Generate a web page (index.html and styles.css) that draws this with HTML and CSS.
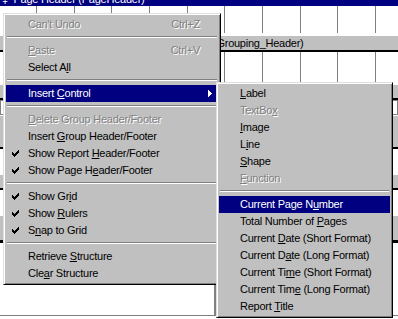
FILE: index.html
```html
<!DOCTYPE html>
<html lang="en">
<head>
  <meta charset="UTF-8" />
  <title>Report Designer</title>
  <link rel="stylesheet" href="styles.css">
</head>
<body>

  <!-- Report designer surface behind the menus -->
  <div class="designer">
    <div class="titlebar"><span class="titlebar-text">‡&nbsp;&nbsp;Page Header (PageHeader)</span></div>
    <div class="grid grid-top"></div>
    <div class="band band-group">(Grouping_Header)</div>
    <div class="grid grid-mid"></div>
    <div class="band band-thin"></div>
    <div class="field-row"></div>
    <div class="band band-tall"></div>
    <div class="grid grid-short"></div>
    <div class="band band-thin"></div>
    <div class="grid grid-short"></div>
    <div class="band band-low"></div>
    <div class="page-end"></div>
  </div>

  <!-- Context menu -->
  <div class="menu main-menu">
    <div class="item disabled"><span></span><span>Can't Undo</span><span class="key">Ctrl+Z</span></div>
    <div class="sep"></div>
    <div class="item disabled"><span></span><span><u>P</u>aste</span><span class="key">Ctrl+V</span></div>
    <div class="item"><span></span><span>Select A<u>l</u>l</span><span></span></div>
    <div class="sep"></div>
    <div class="item active"><span></span><span>Insert <u>C</u>ontrol</span>
      <svg class="arrow" width="4" height="7" viewBox="0 0 4 7"><path d="M0 0h1v7H0zM1 1h1v5H1zM2 2h1v3H2zM3 3h1v1H3z" fill="#fff"/></svg>
    </div>
    <div class="sep"></div>
    <div class="item disabled"><span></span><span><u>D</u>elete Group Header/Footer</span><span></span></div>
    <div class="item"><span></span><span>Insert <u>G</u>roup Header/Footer</span><span></span></div>
    <div class="item"><svg class="check" width="7" height="7" viewBox="0 0 7 7"><path d="M6 0h1v3H6zM5 1h1v3H5zM4 2h1v3H4zM3 3h1v3H3zM2 4h1v3H2zM1 3h1v3H1zM0 2h1v3H0z"/></svg><span>Show Report <u>H</u>eader/Footer</span><span></span></div>
    <div class="item"><svg class="check" width="7" height="7" viewBox="0 0 7 7"><path d="M6 0h1v3H6zM5 1h1v3H5zM4 2h1v3H4zM3 3h1v3H3zM2 4h1v3H2zM1 3h1v3H1zM0 2h1v3H0z"/></svg><span>Show Page H<u>e</u>ader/Footer</span><span></span></div>
    <div class="sep"></div>
    <div class="item"><svg class="check" width="7" height="7" viewBox="0 0 7 7"><path d="M6 0h1v3H6zM5 1h1v3H5zM4 2h1v3H4zM3 3h1v3H3zM2 4h1v3H2zM1 3h1v3H1zM0 2h1v3H0z"/></svg><span>Show Gr<u>i</u>d</span><span></span></div>
    <div class="item"><svg class="check" width="7" height="7" viewBox="0 0 7 7"><path d="M6 0h1v3H6zM5 1h1v3H5zM4 2h1v3H4zM3 3h1v3H3zM2 4h1v3H2zM1 3h1v3H1zM0 2h1v3H0z"/></svg><span>Show <u>R</u>ulers</span><span></span></div>
    <div class="item"><svg class="check" width="7" height="7" viewBox="0 0 7 7"><path d="M6 0h1v3H6zM5 1h1v3H5zM4 2h1v3H4zM3 3h1v3H3zM2 4h1v3H2zM1 3h1v3H1zM0 2h1v3H0z"/></svg><span>S<u>n</u>ap to Grid</span><span></span></div>
    <div class="sep"></div>
    <div class="item"><span></span><span>Retrieve <u>S</u>tructure</span><span></span></div>
    <div class="item"><span></span><span>Cle<u>a</u>r Structure</span><span></span></div>
  </div>

  <!-- Insert Control submenu -->
  <div class="menu sub-menu">
    <div class="item"><span></span><span><u>L</u>abel</span><span></span></div>
    <div class="item disabled"><span></span><span>TextBo<u>x</u></span><span></span></div>
    <div class="item"><span></span><span><u>I</u>mage</span><span></span></div>
    <div class="item"><span></span><span>L<u>i</u>ne</span><span></span></div>
    <div class="item"><span></span><span><u>S</u>hape</span><span></span></div>
    <div class="item disabled"><span></span><span><u>F</u>unction</span><span></span></div>
    <div class="sep"></div>
    <div class="item active"><span></span><span>Current Page N<u>u</u>mber</span><span></span></div>
    <div class="item"><span></span><span>Total Number of <u>P</u>ages</span><span></span></div>
    <div class="item"><span></span><span>Current <u>D</u>ate (Short Format)</span><span></span></div>
    <div class="item"><span></span><span>Current D<u>a</u>te (Long Format)</span><span></span></div>
    <div class="item"><span></span><span>Current Ti<u>m</u>e (Short Format)</span><span></span></div>
    <div class="item"><span></span><span>Current Tim<u>e</u> (Long Format)</span><span></span></div>
    <div class="item"><span></span><span>Report <u>T</u>itle</span><span></span></div>
  </div>

</body>
</html>
```

FILE: styles.css
```css
* {
  box-sizing: border-box;
  margin: 0;
  padding: 0;
}

body {
  width: 398px;
  height: 319px;
  overflow: hidden;
  position: relative;
  background: #fff;
  color: #000;
  font-family: "Liberation Sans", Arial, sans-serif;
  font-size: 11px;
  letter-spacing: -0.25px;
}

/* designer surface */
.designer {
  display: flex;
  flex-direction: column;
  height: 319px;
}

.designer > div {
  flex: none;
}

.titlebar {
  height: 6px;
  background: #000080;
  color: #fff;
  overflow: hidden;
  padding-left: 2px;
}

.titlebar-text {
  display: block;
  line-height: 12px;
  margin-top: -7px;
  white-space: nowrap;
}

.grid {
  background: repeating-linear-gradient(90deg, #fff 0 36px, #808080 36px 37px, #fff 37px 37.67px);
}

.grid-top {
  height: 29px;
  border-bottom: 2px solid #fff;
}

.grid-mid {
  height: 32px;
}

.grid-short {
  height: 25px;
}

.band {
  background: #c0c0c0;
  border-top: 1px solid #fff;
}

.band-group {
  height: 17px;
  line-height: 14px;
  padding-left: 213px;
  border-bottom: 2px solid #000;
  white-space: nowrap;
}

.band-thin {
  height: 16px;
  border-bottom: 2px solid #000;
}

.band-tall {
  height: 34px;
  border-bottom: 2px solid #000;
}

.band-low {
  height: 28px;
  border-bottom: 3px solid #000;
}

.field-row {
  height: 15px;
  background: #fff;
  border: 1px solid #808080;
}

.page-end {
  flex: 1 !important;
  background: linear-gradient(90deg, #fff 0 214px, #808080 214px 216px, #fff 216px);
  border-bottom: 1px solid #808080;
  margin-bottom: 3px;
}

/* menus */
.menu {
  position: absolute;
  background: #c0c0c0;
  border: 1px solid;
  border-color: #dfdfdf #000 #000 #dfdfdf;
  box-shadow: inset 1px 1px #fff, inset -1px -1px #808080;
  padding: 2px;
}

.main-menu {
  left: 3px;
  top: 13px;
  width: 218px;
}

.sub-menu {
  left: 216px;
  top: 82px;
  width: 177px;
}

.item {
  display: grid;
  grid-template-columns: 22px 1fr auto;
  align-items: center;
  height: 17px;
  line-height: 17px;
  white-space: nowrap;
}

.sub-menu .item {
  grid-template-columns: 21px 1fr auto;
}

.item.active {
  background: #000080;
  color: #fff;
}

.item.disabled {
  color: #808080;
  text-shadow: 1px 1px 0 #fff;
}

.key {
  padding-right: 18px;
}

.check {
  display: block;
  margin-left: 6px;
  shape-rendering: crispEdges;
}

.arrow {
  display: block;
  margin-right: 6px;
  shape-rendering: crispEdges;
}

.sep {
  height: 2px;
  margin: 3px 1px 4px;
  border-top: 1px solid #808080;
  border-bottom: 1px solid #fff;
}
```
